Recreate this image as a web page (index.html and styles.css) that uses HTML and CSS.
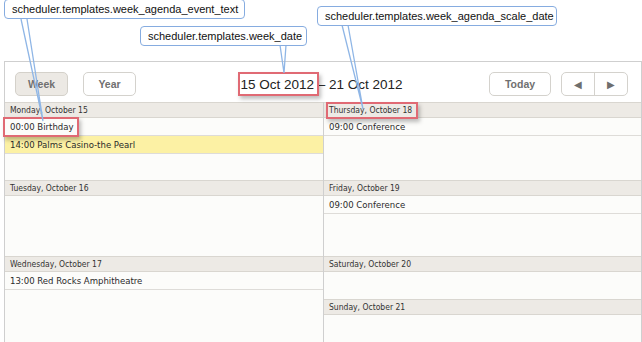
FILE: index.html
```html
<!DOCTYPE html>
<html lang="en">
<head>
  <meta charset="UTF-8" />
  <title>Week Agenda View</title>
  <link rel="stylesheet" href="styles.css">
</head>
<body>
  <div class="scheduler">
    <div class="toolbar">
      <div class="tabs">
        <button class="btn active">Week</button>
        <button class="btn">Year</button>
      </div>
      <div class="date-title">15 Oct 2012 – 21 Oct 2012</div>
      <div class="nav">
        <button class="btn today">Today</button>
        <div class="arrows">
          <button class="arrow">&#9664;</button>
          <button class="arrow">&#9654;</button>
        </div>
      </div>
    </div>

    <div class="agenda">
      <div class="column left">
        <div class="day mon">
          <div class="day-head">Monday, October 15</div>
          <div class="event">00:00 Birthday</div>
          <div class="event selected">14:00 Palms Casino-the Pearl</div>
        </div>
        <div class="day tue">
          <div class="day-head">Tuesday, October 16</div>
        </div>
        <div class="day wed">
          <div class="day-head">Wednesday, October 17</div>
          <div class="event">13:00 Red Rocks Amphitheatre</div>
        </div>
      </div>
      <div class="column right">
        <div class="day thu">
          <div class="day-head">Thursday, October 18</div>
          <div class="event">09:00 Conference</div>
        </div>
        <div class="day fri">
          <div class="day-head">Friday, October 19</div>
          <div class="event">09:00 Conference</div>
        </div>
        <div class="day sat">
          <div class="day-head">Saturday, October 20</div>
        </div>
        <div class="day sun">
          <div class="day-head">Sunday, October 21</div>
        </div>
      </div>
    </div>
  </div>

  <!-- annotations -->
  <div class="mark mark-date"></div>
  <div class="mark mark-event"></div>
  <div class="mark mark-scale"></div>

  <svg class="pointers" width="642" height="342" viewBox="0 0 642 342">
    <path d="M21 19 L43 121 L27 19" />
    <path d="M280 45 L284 73 L286 45" />
    <path d="M342 25 L363 109 L348 25" />
  </svg>

  <div class="callout c-event">scheduler.templates.week_agenda_event_text</div>
  <div class="callout c-date">scheduler.templates.week_date</div>
  <div class="callout c-scale">scheduler.templates.week_agenda_scale_date</div>
</body>
</html>
```

FILE: styles.css
```css
* {
  box-sizing: border-box;
}
body {
  margin: 0;
  background: #fff;
  font-family: 'Liberation Sans', Arial, sans-serif;
  width: 642px;
  height: 342px;
  position: relative;
  overflow: hidden;
}
.scheduler {
  margin: 61px 0 0 4px;
  width: 638px;
  height: 281px;
  border: 1px solid #cfcfcf;
  border-bottom: none;
  background: #fcfcfa;
  display: flex;
  flex-direction: column;
}
.toolbar {
  height: 40px;
  padding: 10px 13px 0 10px;
  display: grid;
  grid-template-columns: 1fr auto 1fr;
  align-items: start;
  background: #fff;
}
.tabs {
  display: flex;
  gap: 15px;
}
.btn {
  height: 24px;
  width: 53px;
  padding: 0;
  border: 1px solid #d4d2cd;
  border-radius: 5px;
  background: #fff;
  color: #707070;
  font-family: 'Liberation Sans', Arial, sans-serif;
  font-size: 10.5px;
  font-weight: bold;
}
.btn.active {
  background: #ece9e4;
  border-color: #d4d1ca;
}
.btn.today {
  width: 62px;
}
.date-title {
  font-size: 13.5px;
  color: #222;
  line-height: 25px;
}
.nav {
  display: flex;
  justify-content: flex-end;
  gap: 10px;
}
.arrows {
  display: flex;
  width: 67px;
  height: 24px;
  border: 1px solid #d4d2cd;
  border-radius: 5px;
  background: #fff;
}
.arrow {
  flex: 1;
  border: none;
  background: none;
  padding: 0;
  color: #6e6e6e;
  font-size: 10px;
}
.arrow + .arrow {
  border-left: 1px solid #d4d2cd;
}
.agenda {
  flex: 1;
  display: grid;
  grid-template-columns: 319px 1fr;
}
.column {
  display: flex;
  flex-direction: column;
}
.column.left {
  border-right: 1px solid #cfcfcf;
}
.day {
  overflow: hidden;
}
.mon, .thu { height: 78px; }
.tue, .fri { height: 76px; }
.sat { height: 43px; }
.wed, .sun { flex: 1; }
.day-head {
  height: 16px;
  padding-left: 5px;
  border-top: 1px solid #d9d6d0;
  border-bottom: 1px solid #d9d6d0;
  background: #edeae5;
  color: #333;
  font-family: 'DejaVu Sans Condensed', 'Liberation Sans', sans-serif;
  font-size: 8.5px;
  line-height: 14px;
}
.event {
  height: 18px;
  padding-left: 5px;
  border-bottom: 1px solid #dedcd8;
  color: #2a2a2a;
  font-family: 'DejaVu Sans Condensed', 'Liberation Sans', sans-serif;
  font-size: 9.5px;
  line-height: 17px;
}
.event.selected {
  background: #fcf1a4;
}

/* annotations */
.mark {
  position: absolute;
  border: 2px solid #e06a74;
  box-shadow: 2px 3px 4px rgba(0,0,0,0.25);
}
.mark-date {
  left: 238px;
  top: 72px;
  width: 81px;
  height: 24px;
}
.mark-event {
  left: 3px;
  top: 117px;
  width: 76px;
  height: 20px;
}
.mark-scale {
  left: 326px;
  top: 102px;
  width: 92px;
  height: 17px;
}
.pointers {
  position: absolute;
  left: 0;
  top: 0;
}
.pointers path {
  fill: none;
  stroke: #8fb6e6;
  stroke-width: 1.3;
}
.callout {
  position: absolute;
  height: 20px;
  padding: 0 7px;
  border: 1px solid #86ace0;
  border-radius: 4px;
  background: #fff;
  color: #111;
  font-size: 11px;
  line-height: 18px;
  white-space: nowrap;
}
.c-event {
  left: 4px;
  top: -1px;
  width: 241px;
}
.c-date {
  left: 140px;
  top: 26px;
  width: 167px;
}
.c-scale {
  left: 317px;
  top: 6px;
  width: 240px;
}
```
